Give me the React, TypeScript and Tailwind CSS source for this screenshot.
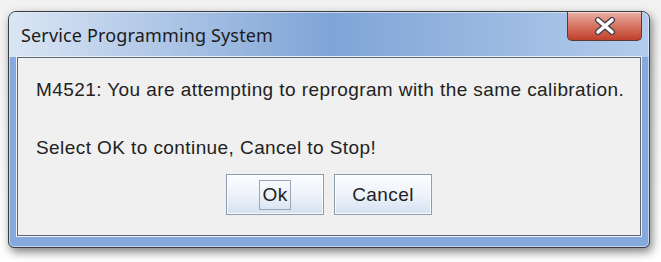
import React from 'react';

const CloseButton = () => {
    return (
        <div className="absolute top-0 right-[7px] w-[75px] h-[29px] rounded-b-[5px] border border-t-0 border-[#5a3a36] bg-gradient-to-b from-[#e9b0a6] via-[#d57462] to-[#bf3f2b] flex items-center justify-center shadow-[inset_0_1px_0_rgba(255,255,255,0.5)]">
            <svg width="26" height="18" viewBox="0 0 26 18">
                <path
                    d="M6 3 L20 15 M20 3 L6 15"
                    stroke="#3d3d4a"
                    strokeWidth="6"
                    strokeLinecap="round"
                />
                <path
                    d="M6 3 L20 15 M20 3 L6 15"
                    stroke="#ffffff"
                    strokeWidth="3.6"
                    strokeLinecap="round"
                />
            </svg>
        </div>
    );
};

const DialogButton = ({ label, focused }: { label: string; focused?: boolean }) => {
    return (
        <button className="w-[98px] h-[41px] border border-[#8f9cae] bg-gradient-to-b from-[#fbfcfe] via-[#eef3fa] to-[#d5e1f1] flex items-center justify-center text-[19px] tracking-[0.4px] text-[#222] shadow-[inset_0_0_0_1px_rgba(255,255,255,0.8)]">
            <span className={focused ? 'border border-[#9aa6b8] px-[2px] leading-[28px]' : 'leading-[28px]'}>
                {label}
            </span>
        </button>
    );
};

export default function App() {
    return (
        <div className="w-[661px] h-[262px] bg-gradient-to-b from-[#f2f2f2] to-white pt-[11px] pl-[8px] font-['Liberation_Sans',Arial,sans-serif]">
            <div className="relative w-[642px] h-[237px] rounded-t-[8px] rounded-b-[6px] border border-[#3a3d44] bg-[#85a9dc] shadow-[2px_4px_10px_rgba(0,0,0,0.5)] flex flex-col overflow-hidden">
                <div className="absolute inset-0 rounded-t-[7px] rounded-b-[5px] border border-[#dfe9f6]/70 pointer-events-none" />
                <div className="h-[45px] flex items-center pl-[12px] pt-[2px] bg-gradient-to-r from-[#dbe6f4] via-[#7fa4d6] to-[#b3cceb]">
                    <span className="font-['Noto_Sans',sans-serif] text-[18px] text-[#1b1b1b] tracking-[0.15px]">
                        Service Programming System
                    </span>
                </div>
                <CloseButton />
                <div className="flex-1 mx-[8px] mb-[11px] bg-[#f0f0f0] border border-[#5f6670] shadow-[0_0_0_1px_#eef3fa] flex flex-col items-center pt-[21px]">
                    <div className="w-full pl-[18px] text-[19px] tracking-[0.42px] leading-[21px] text-[#222]">
                        <p>M4521: You are attempting to reprogram with the same calibration.</p>
                        <p className="mt-[37px]">Select OK to continue, Cancel to Stop!</p>
                    </div>
                    <div className="flex gap-[10px] mt-[16px]">
                        <DialogButton label="Ok" focused />
                        <DialogButton label="Cancel" />
                    </div>
                </div>
            </div>
        </div>
    );
}
